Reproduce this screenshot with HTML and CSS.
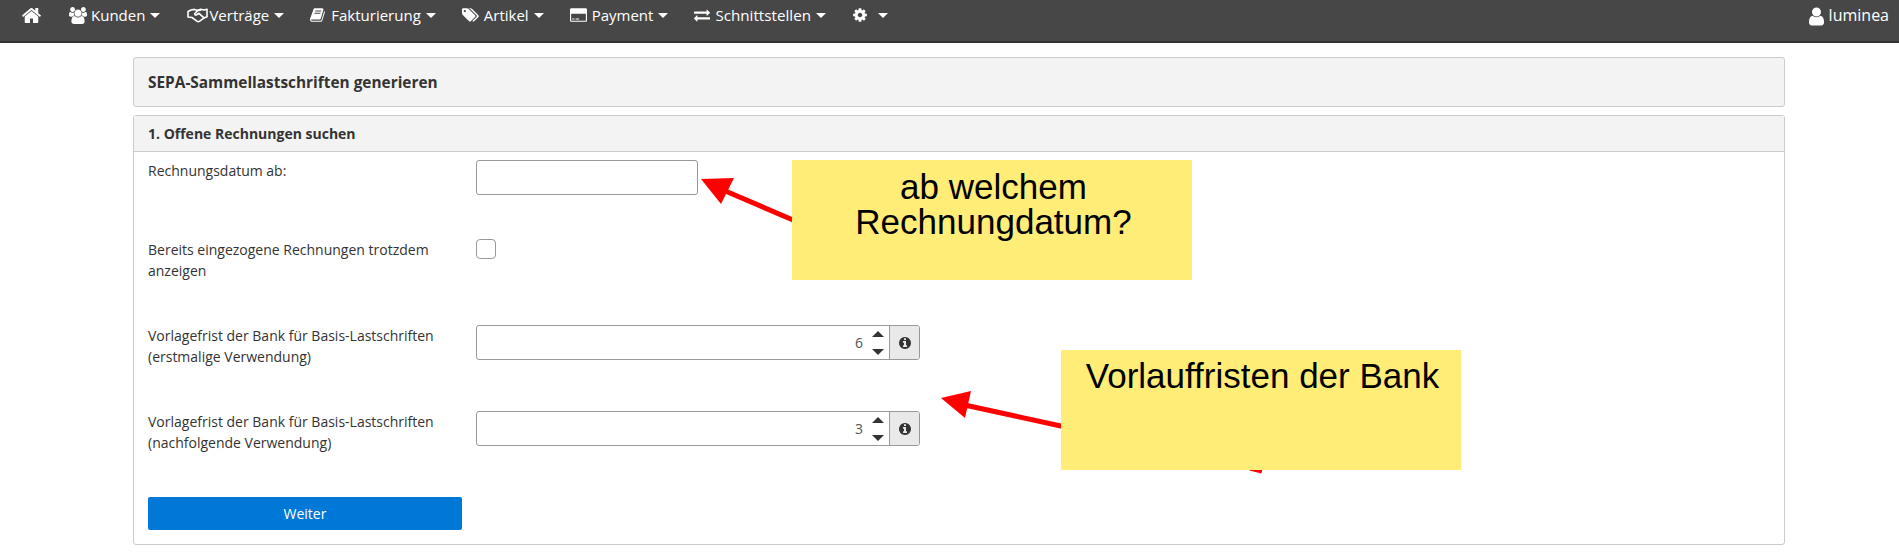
FILE: index.html
```html
<!DOCTYPE html>
<html lang="de">
<head>
<meta charset="utf-8">
<title>SEPA-Sammellastschriften generieren</title>
<link rel="stylesheet" href="styles.css">
</head>
<body>
<nav class="navbar">
  <ul class="nav-main">
    <li class="nav-item"><svg class="ic ic-home" viewBox="0 0 1792 1792"><path d="M1472 992v480q0 26-19 45t-45 19h-384v-384h-256v384h-384q-26 0-45-19t-19-45v-480q0-1 .5-3t.5-3l575-474 575 474q1 2 1 6zm223-69l-62 74q-8 9-21 11h-3q-13 0-21-7l-692-577-692 577q-12 8-24 7-13-2-21-11l-62-74q-8-10-7-23.5t11-21.5l719-599q32-26 76-26t76 26l244 204v-195q0-14 9-23t23-9h192q14 0 23 9t9 23v408l219 182q10 8 11 21.5t-7 23.5z"/></svg></li>
    <li class="nav-item nav-item-users"><svg class="ic ic-users" viewBox="0 0 1920 1792"><path d="M593 896q-162 5-265 128h-134q-82 0-138-40.5t-56-118.5q0-353 124-353 6 0 43.5 21t97.5 42.5 119 21.5q67 0 133-23-5 37-5 66 0 139 81 256zm1071 637q0 120-73 189.5t-194 69.5h-874q-121 0-194-69.5t-73-189.5q0-53 3.5-103.5t14-109 26.5-108.5 43-97.5 62-81 85.5-53.5 111.5-20q10 0 43 21.5t73 48 107 48 135 21.5 135-21.5 107-48 73-48 43-21.5q61 0 111.5 20t85.5 53.5 62 81 43 97.5 26.5 108.5 14 109 3.5 103.5zm-1024-1277q0 106-75 181t-181 75-181-75-75-181 75-181 181-75 181 75 75 181zm704 384q0 159-112.5 271.5t-271.5 112.5-271.5-112.5-112.5-271.5 112.5-271.5 271.5-112.5 271.5 112.5 112.5 271.5zm576 225q0 78-56 118.5t-138 40.5h-134q-103-123-265-128 81-117 81-256 0-29-5-66 66 23 133 23 59 0 119-21.5t97.5-42.5 43.5-21q124 0 124 353zm-128-609q0 106-75 181t-181 75-181-75-75-181 75-181 181-75 181 75 75 181z"/></svg><span class="nav-text nav-text-users">Kunden</span><i class="caret"></i></li>
    <li class="nav-item nav-item-shake"><svg class="ic ic-shake" viewBox="0 0 21 16"><path class="shake" d="M1 4.500 4 3l3.500-.6 3 1 3-1.200 3.500.8 3-.8v7.500l-2.500 1-4.800 3.500c-1 .7-2 .6-2.800-.1L5 10.500 1 10z"/><path class="shake" d="M13.500 3.200 11 3.400 7.800 6.500c-.6 1 .8 2 1.800 1.300l2.400-1.500 5 4.600"/></svg><span class="nav-text nav-text-tight">Verträge</span><i class="caret"></i></li>
    <li class="nav-item"><svg class="ic ic-book" viewBox="0 0 1792 1792"><path d="M1639 478q40 57 18 129l-275 906q-19 64-76.500 107.500t-122.500 43.500h-923q-77 0-148.500-53.500t-99.500-131.500q-24-67-2-127 0-4 3-27t4-37q1-8-3-21.500t-3-19.500q2-11 8-21t16.500-23.500 16.500-23.500q23-38 45-91.500t30-91.500q3-10 .5-30t-.5-28q3-11 17-28t17-23q21-36 42-92t25-90q1-9-2.500-32t.5-28q4-13 22-30.500t22-22.500q19-26 42.500-84.500t27.500-96.500q1-8-3-25.500t-2-26.500q2-8 9-18t18-23 17-21q8-12 16.500-30.500t15-35 16-36 19.500-32 26.500-23.500 36-11.500 47.500 5.500l-1 3q38-9 51-9h761q74 0 114 56t18 130l-274 906q-36 119-71.500 153.500t-128.500 34.500h-869q-27 0-38 15-11 16-1 43 24 70 144 70h923q29 0 56-15.500t35-41.500l300-987q7-22 5-57 38 15 59 43zm-1064 2q-4 13 2 22.500t20 9.500h608q13 0 25.500-9.500t16.500-22.500l21-64q4-13-2-22.500t-20-9.500h-608q-13 0-25.500 9.500t-16.500 22.500zm-83 256q-4 13 2 22.500t20 9.500h608q13 0 25.500-9.500t16.500-22.500l21-64q4-13-2-22.500t-20-9.500h-608q-13 0-25.500 9.500t-16.500 22.500z"/></svg><span class="nav-text">Fakturierung</span><i class="caret"></i></li>
    <li class="nav-item"><svg class="ic ic-tags" viewBox="0 0 1920 1792"><path d="M448 448q0-53-37.500-90.500t-90.500-37.500-90.500 37.500-37.500 90.500 37.500 90.500 90.500 37.500 90.500-37.500 37.500-90.500zm1067 576q0 53-37 90l-491 492q-39 37-91 37-53 0-90-37l-715-716q-38-37-64.500-101t-26.500-117v-416q0-52 38-90t90-38h416q53 0 117 26.500t102 64.500l715 714q37 39 37 91zm384 0q0 53-37 90l-491 492q-39 37-91 37-36 0-59-14t-53-45l470-470q37-37 37-90 0-52-37-91l-715-714q-38-38-102-64.500t-117-26.500h224q53 0 117 26.500t102 64.500l715 714q37 39 37 91z"/></svg><span class="nav-text">Artikel</span><i class="caret"></i></li>
    <li class="nav-item"><svg class="ic ic-card" viewBox="0 0 1920 1792"><path fill-rule="evenodd" d="M160 128h1600q66 0 113 47t47 113v1216q0 66-47 113t-113 47H160q-66 0-113-47T0 1504V288q0-66 47-113t113-47zM128 768v736q0 13 9.500 22.500t22.500 9.500h1600q13 0 22.500-9.500t9.500-22.500V768zm128 640v-128h256v128zm384 0v-128h384v128z"/></svg><span class="nav-text">Payment</span><i class="caret"></i></li>
    <li class="nav-item"><svg class="ic ic-exch" viewBox="0 0 1792 1792"><path d="M1792 1184v192q0 13-9.500 22.500t-22.500 9.500h-1376v192q0 13-9.500 22.500t-22.500 9.500q-12 0-24-10l-319-320q-9-9-9-22 0-14 9-23l320-320q9-9 23-9 13 0 22.500 9.500t9.500 22.500v192h1376q13 0 22.500 9.500t9.500 22.500zm0-544q0 14-9 23l-320 320q-9 9-23 9-13 0-22.500-9.500t-9.500-22.500v-192h-1376q-13 0-22.500-9.500t-9.500-22.500v-192q0-13 9.500-22.500t22.500-9.500h1376v-192q0-14 9-23t23-9q12 0 24 10l319 319q9 9 9 23z"/></svg><span class="nav-text nav-text-wide">Schnittstellen</span><i class="caret"></i></li>
    <li class="nav-item"><svg class="ic ic-cog" viewBox="0 0 1792 1792"><path d="M1152 896q0-106-75-181t-181-75-181 75-75 181 75 181 181 75 181-75 75-181zm512-109v222q0 12-8 23t-20 13l-185 28q-19 54-39 91 35 50 107 138 10 12 10 25t-9 23q-27 37-99 108t-94 71q-12 0-26-9l-138-108q-44 23-91 38-16 136-29 186-7 28-36 28h-222q-14 0-24.500-8.500t-11.500-21.500l-28-184q-49-16-90-37l-141 107q-10 9-25 9-14 0-25-11-126-114-165-168-7-10-7-23 0-12 8-23 15-21 51-66.500t54-70.500q-27-50-41-99l-183-27q-13-2-21-12.500t-8-23.500v-222q0-12 8-23t19-13l186-28q14-46 39-92-40-57-107-138-10-12-10-24 0-10 9-23 26-36 98.500-107.500t94.500-71.500q13 0 26 10l138 107q44-23 91-38 16-136 29-186 7-28 36-28h222q14 0 24.500 8.500t11.500 21.500l28 184q49 16 90 37l142-107q9-9 24-9 13 0 25 10 129 119 165 170 7 8 7 22 0 12-8 23-15 21-51 66.500t-54 70.500q26 50 41 98l183 28q13 2 21 12.500t8 23.500z"/></svg><i class="caret caret-cog"></i></li>
  </ul>
  <div class="nav-user"><svg class="ic ic-user" viewBox="0 0 1792 1792"><path d="M1536 1399q0 109-62.500 187t-150.500 78h-854q-88 0-150.500-78t-62.500-187q0-85 8.500-160.500t31.500-152 58.500-131 94-89 134.500-34.500q131 128 313 128t313-128q76 0 134.500 34.500t94 89 58.500 131 31.500 152 8.500 160.500zm-256-887q0 159-112.500 271.500t-271.500 112.500-271.500-112.500-112.500-271.500 112.500-271.500 271.500-112.500 271.500 112.500 112.500 271.500z"/></svg><span class="nav-text nav-text-user">luminea</span></div>
</nav>

<main class="page">
  <section class="panel panel-title"><h1>SEPA-Sammellastschriften generieren</h1></section>

  <section class="panel">
    <h2 class="panel-head">1. Offene Rechnungen suchen</h2>
    <form class="panel-body">
      <div class="row">
        <label class="label">Rechnungsdatum ab:</label>
        <input class="input" type="text">
      </div>
      <div class="row">
        <label class="label">Bereits eingezogene Rechnungen trotzdem anzeigen</label>
        <span class="check"></span>
      </div>
      <div class="row">
        <label class="label">Vorlagefrist der Bank für Basis-Lastschriften<br>(erstmalige Verwendung)</label>
        <div class="num">
          <span class="num-val">6</span>
          <span class="spin"><i class="tri-up"></i><i class="tri-down"></i></span>
          <span class="addon"><svg class="ic-info" viewBox="0 0 1792 1792"><path d="M1152 1376v-160q0-14-9-23t-23-9h-96v-512q0-14-9-23t-23-9h-320q-14 0-23 9t-9 23v160q0 14 9 23t23 9h96v320h-96q-14 0-23 9t-9 23v160q0 14 9 23t23 9h448q14 0 23-9t9-23zm-128-896v-160q0-14-9-23t-23-9h-192q-14 0-23 9t-9 23v160q0 14 9 23t23 9h192q14 0 23-9t9-23zm640 416q0 209-103 385.500t-279.500 279.500-385.500 103-385.500-103-279.500-279.500-103-385.500 103-385.500 279.500-279.500 385.500-103 385.500 103 279.500 279.500 103 385.500z"/></svg></span>
        </div>
      </div>
      <div class="row">
        <label class="label">Vorlagefrist der Bank für Basis-Lastschriften<br>(nachfolgende Verwendung)</label>
        <div class="num">
          <span class="num-val">3</span>
          <span class="spin"><i class="tri-up"></i><i class="tri-down"></i></span>
          <span class="addon"><svg class="ic-info" viewBox="0 0 1792 1792"><path d="M1152 1376v-160q0-14-9-23t-23-9h-96v-512q0-14-9-23t-23-9h-320q-14 0-23 9t-9 23v160q0 14 9 23t23 9h96v320h-96q-14 0-23 9t-9 23v160q0 14 9 23t23 9h448q14 0 23-9t9-23zm-128-896v-160q0-14-9-23t-23-9h-192q-14 0-23 9t-9 23v160q0 14 9 23t23 9h192q14 0 23-9t9-23zm640 416q0 209-103 385.500t-279.500 279.500-385.500 103-385.500-103-279.500-279.500-103-385.500 103-385.500 279.500-279.500 385.500-103 385.500 103 279.500 279.500 103 385.500z"/></svg></span>
        </div>
      </div>
      <button class="btn" type="button">Weiter</button>
    </form>
  </section>
</main>

<svg class="arrows" viewBox="0 0 1899 554">
  <polygon points="701,179 734,178 721,204"/>
  <line x1="723" y1="190" x2="800" y2="223"/>
  <polygon points="941,398 971,391 965,418"/>
  <line x1="960" y1="404" x2="1070" y2="428"/>
  <line x1="1250" y1="468" x2="1262" y2="471"/>
</svg>
<div class="note note-a">ab welchem<br>Rechnungdatum?</div>
<div class="note note-b">Vorlauffristen der Bank</div>
</body>
</html>
```

FILE: styles.css
```css
* { box-sizing: border-box; }
html, body { margin: 0; padding: 0; height: 554px; overflow: hidden; }
body { background: #fff; font-family: "Open Sans", sans-serif; color: #333; position: relative; }

.navbar { height: 43px; background: #474747; border-bottom: 2px solid #333; display: flex; justify-content: space-between; padding: 0 10px 0 21px; color: #fff; }
.nav-main { list-style: none; margin: 0; padding: 0; display: flex; gap: 26px; }
.nav-item, .nav-user { display: flex; align-items: center; height: 30px; }
.nav-item-users { margin-left: 1px; }
.nav-item-shake { margin-left: 1px; }
.nav-text { font-size: 15px; line-height: 30px; margin-left: 5px; }
.nav-text-users { margin-left: 4px; }
.nav-text-tight { margin-left: 1px; }
.nav-text-wide { font-size: 15.200px; }
.nav-text-user { font-size: 16px; margin-left: 2px; }
.ic { display: block; fill: #fff; flex: none; }
.ic-home { width: 21px; height: 21px; }
.ic-users { width: 18px; height: 17px; }
.ic-shake { width: 21px; height: 16px; }
.ic-book { width: 16px; height: 16px; }
.ic-tags { width: 17px; height: 16px; }
.ic-card { width: 17px; height: 16px; }
.ic-exch { width: 16px; height: 16px; }
.ic-cog { width: 16px; height: 16px; }
.ic-user { width: 21px; height: 21px; margin-top: 2px; }
.shake { fill: none; stroke: #fff; stroke-width: 1.6; stroke-linejoin: round; stroke-linecap: round; }
.caret { width: 0; height: 0; margin-left: 5px; border-left: 5px solid transparent; border-right: 5px solid transparent; border-top: 5px solid #fff; }
.caret-cog { margin-left: 10px; }

.page { padding: 14px 114px 0 133px; }
.panel { border: 1px solid #ccc; border-radius: 3px; margin-bottom: 8px; }
.panel-title { height: 50px; background: #f3f3f3; display: flex; align-items: center; padding-left: 14px; }
h1 { margin: 0; font-size: 15.400px; font-weight: 700; color: #333; }
.panel-head { margin: 0; height: 36px; padding: 0 14px; background: #f3f3f3; border-bottom: 1px solid #ccc; font-size: 14px; font-weight: 700; line-height: 35px; color: #333; }
.panel-body { padding: 8px 14px 0; height: 392px; display: block; }

.row { display: flex; margin-bottom: 44px; align-items: flex-start; }
.label { width: 328px; flex: none; padding-right: 30px; font-size: 14px; line-height: 21px; color: #333; }
.input { width: 222px; height: 35px; border: 1px solid #999; border-radius: 3px; padding: 0; background: #fff; }
.check { display: block; width: 20px; height: 20px; border: 1px solid #999; border-radius: 4px; background: #fff; }
.num { width: 444px; height: 35px; border: 1px solid #999; border-radius: 3px; display: flex; align-items: stretch; justify-content: flex-end; overflow: hidden; }
.num-val { font-size: 14px; line-height: 33px; color: #555; }
.spin { width: 22px; margin-left: 4px; display: flex; flex-direction: column; align-items: center; justify-content: center; gap: 12px; }
.tri-up { width: 0; height: 0; border-left: 6px solid transparent; border-right: 6px solid transparent; border-bottom: 6px solid #333; }
.tri-down { width: 0; height: 0; border-left: 6px solid transparent; border-right: 6px solid transparent; border-top: 6px solid #333; }
.addon { width: 30px; background: #e9e9e9; border-left: 1px solid #999; display: flex; align-items: center; justify-content: center; }
.ic-info { width: 14px; height: 14px; fill: #333; }
.btn { display: block; width: 314px; height: 33px; border: 0; border-radius: 2px; background: #0078d7; color: #fff; font-family: "Open Sans", sans-serif; font-size: 14px; padding: 0; }

.arrows { position: absolute; left: 0; top: 0; width: 1899px; height: 554px; pointer-events: none; }
.arrows polygon { fill: #f00; }
.arrows line { stroke: #f00; stroke-width: 5; }
.note { position: absolute; background: #ffed78; color: #000; font-family: "Liberation Sans", Arial, sans-serif; font-size: 35px; line-height: 35px; text-align: center; }
.note-a { left: 792px; top: 160px; width: 400px; height: 120px; padding: 9px 0 0 3px; }
.note-b { left: 1061px; top: 350px; width: 400px; height: 120px; padding: 8px 0 0 3px; }
```
